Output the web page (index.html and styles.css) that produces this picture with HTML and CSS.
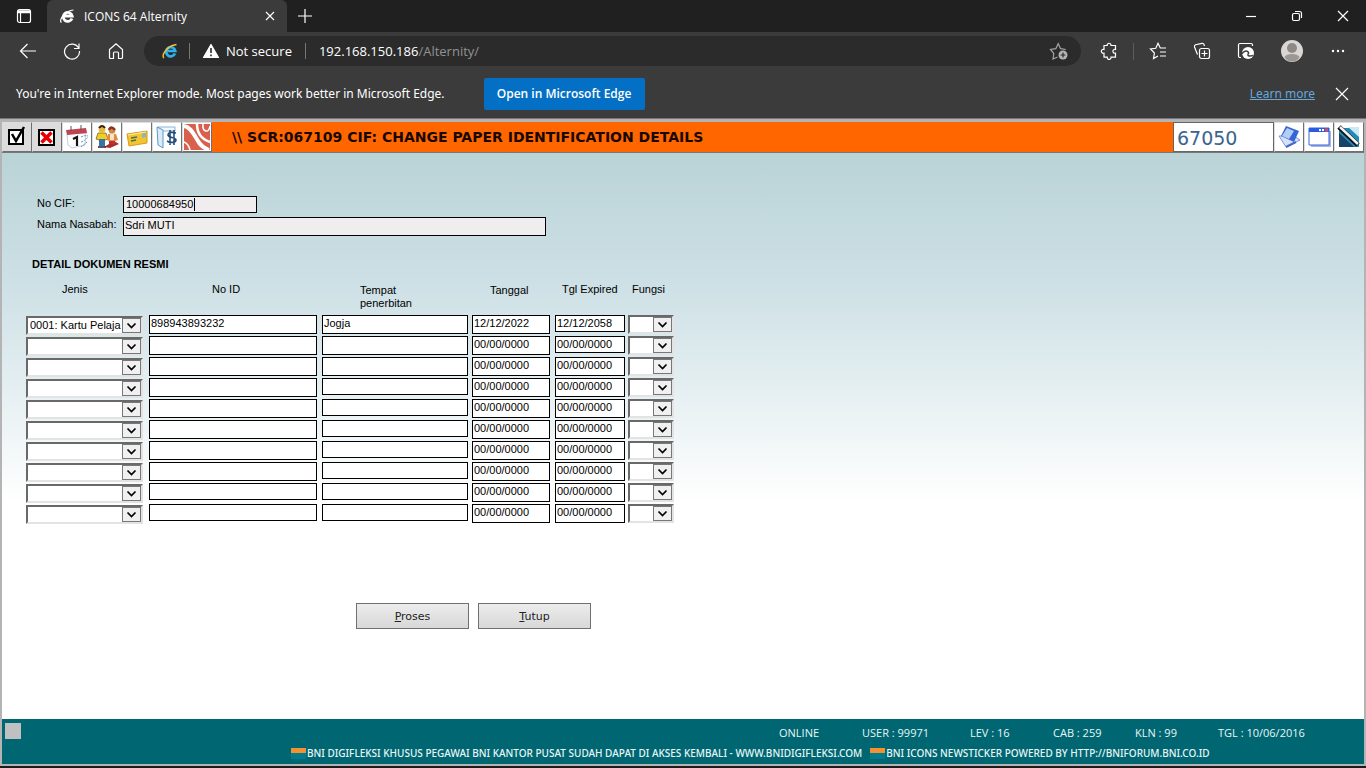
FILE: index.html
```html
<!DOCTYPE html>
<html lang="id">
<head>
<meta charset="utf-8">
<title>ICONS 64 Alternity</title>
<link rel="stylesheet" href="styles.css">
</head>
<body>
<header class="browser">
  <div class="titlebar">
    <button class="tab-menu" aria-label="Tab actions"><svg width="16" height="16" viewBox="0 0 16 16"><rect x="1.5" y="1.5" width="13" height="13" rx="2"/><path d="M2 3h12M2 4.500h12" stroke-width="1.500"/><path d="M4.500 5v9"/></svg></button>
    <div class="tab">
      <svg class="tab-logo" width="16" height="16" viewBox="0 0 16 16"><path d="M13 10.500a4.500 4.500 0 1 1 .2-2.500H5" stroke-width="2.800"/><path d="M2.500 14.500C-1 12.500 6 2.500 14.500 2" stroke-width="1.200"/></svg>
      <span class="tab-title">ICONS 64 Alternity</span>
      <button class="tab-close" aria-label="Close tab"><svg width="10" height="10" viewBox="0 0 10 10"><path d="M1 1l8 8M9 1l-8 8"/></svg></button>
    </div>
    <button class="new-tab" aria-label="New tab"><svg width="16" height="16" viewBox="0 0 16 16"><path d="M8 1v14M1 8h14"/></svg></button>
    <div class="window-controls">
      <button aria-label="Minimize"><svg width="12" height="12" viewBox="0 0 12 12"><path d="M1 6.500h10"/></svg></button>
      <button aria-label="Restore"><svg width="12" height="12" viewBox="0 0 12 12"><rect x="1.500" y="3.500" width="7" height="7" rx="1.500"/><path d="M4 1.500h4.500a2 2 0 0 1 2 2V8"/></svg></button>
      <button aria-label="Close"><svg width="12" height="12" viewBox="0 0 12 12"><path d="M1 1l10 10M11 1L1 11"/></svg></button>
    </div>
  </div>
  <nav class="toolbar">
    <button class="tool" aria-label="Back"><svg width="18" height="18" viewBox="0 0 18 18"><path d="M17 9H1.500M8.500 2l-7 7 7 7"/></svg></button>
    <button class="tool" aria-label="Refresh"><svg width="18" height="18" viewBox="0 0 18 18"><path d="M15.700 6.200A7.500 7.500 0 1 0 16.500 9M16 1.500v5h-5"/></svg></button>
    <button class="tool" aria-label="Home"><svg width="18" height="18" viewBox="0 0 18 18"><path d="M2.500 7.500L9 1.700l6.500 5.800v8a1 1 0 0 1-1 1h-3V11a1 1 0 0 0-1-1h-3a1 1 0 0 0-1 1v5.500h-3a1 1 0 0 1-1-1z"/></svg></button>
    <div class="address">
      <svg class="ie" width="18" height="18" viewBox="0 0 18 18"><path d="M14 11.500a4.600 4.600 0 1 1 .3-2.500H6" stroke="#2fb1ee" stroke-width="2.700"/><path d="M3 16C-.5 14 6 3.500 15.500 2.500" stroke="#f2c230" stroke-width="1.500"/></svg>
      <span class="divider"></span>
      <svg class="warn" width="18" height="16" viewBox="0 0 18 16"><path d="M9 1.500L16.500 14.500h-15z" fill="#fff" stroke="#fff" stroke-linejoin="round"/><path d="M9 5v5M9 11.500v1.700" stroke="#2b2b2b" stroke-width="1.600"/></svg>
      <span class="secure">Not secure</span>
      <span class="divider"></span>
      <span class="url">192.168.150.186<span class="path">/Alternity/</span></span>
      <button class="star" aria-label="Add to favorites"><svg width="20" height="18" viewBox="0 0 20 18"><path d="M8.500 15l-4.500 2 .8-5.500L1.500 7.500l5.300-.8L9.200 1.700l2.400 5 5.200.8"/><circle cx="14" cy="13" r="4.500" fill="#b5b5b5" stroke="none"/><path d="M14 10.500v5M11.500 13h5" stroke="#2b2b2b"/></svg></button>
    </div>
    <button class="tool ext" aria-label="Extensions"><svg width="18" height="18" viewBox="0 0 18 18"><path d="M4 3.500h3.200c-.3-3 4-3 3.800 0h4.500v4c-3.500-.6-3.500 4.200 0 3.700v4H11c.2 3-4.100 3-3.800 0H4v-4c-3.600.5-3.600-4.300 0-3.700z"/></svg></button>
    <span class="tool-divider"></span>
    <button class="tool" aria-label="Favorites"><svg width="18" height="18" viewBox="0 0 18 18"><path d="M9 14l-4.500 2.500.9-5.500L1.500 7l5.300-.7 2.200-5 2.300 4.700H17M11 10h6M11 14h6"/></svg></button>
    <button class="tool" aria-label="Collections"><svg width="18" height="18" viewBox="0 0 18 18"><rect x="6.500" y="6.500" width="10" height="10" rx="2"/><path d="M11.500 8.500v6M8.500 11.500h6M4.500 12.500L1.500 5a2 2 0 0 1 1-2.300L9 1.300c1.500-.3 2 .5 2.500 2.700"/></svg></button>
    <button class="tool" aria-label="Internet Explorer mode"><svg width="18" height="18" viewBox="0 0 18 18"><path d="M4 15.500H3a1.500 1.500 0 0 1-1.500-1.500V3A1.500 1.500 0 0 1 3 1.500h11A1.500 1.500 0 0 1 15.500 3v1"/><circle cx="11" cy="11" r="6" fill="#fff" stroke="none"/><path d="M5 12c1-3 5-4 6.500-1.500.5 1-.8 1.500-.6 2.500.3 1.300 3 1.300 5 .4" stroke="#3b3b3b" stroke-width="1.500"/></svg></button>
    <button class="tool profile" aria-label="Profile"><svg width="24" height="24" viewBox="0 0 24 24"><circle cx="12" cy="12" r="11" fill="#d9d6d3" stroke="none"/><circle cx="12" cy="9" r="5" fill="#8d8987" stroke="none"/><path d="M4.500 18c2-4 13-4 15 0-2.500 6-12.500 6-15 0z" fill="#9b9794" stroke="none"/></svg></button>
    <button class="tool" aria-label="Settings and more"><svg width="16" height="4" viewBox="0 0 16 4"><g fill="#fff" stroke="none"><circle cx="3" cy="2" r="1.200"/><circle cx="8" cy="2" r="1.200"/><circle cx="13" cy="2" r="1.200"/></g></svg></button>
  </nav>
  <div class="infobar">
    <span>You're in Internet Explorer mode. Most pages work better in Microsoft Edge.</span>
    <button class="open-edge">Open in Microsoft Edge</button>
    <a class="learn" href="#">Learn more</a>
    <button class="dismiss" aria-label="Dismiss"><svg width="14" height="14" viewBox="0 0 14 14"><path d="M1 1l12 12M13 1L1 13"/></svg></button>
  </div>
</header>
<main class="app">
  <div class="appbar">
    <button class="appbtn gray" aria-label="Proses"><svg width="26" height="26" viewBox="0 0 26 26"><rect x="5" y="6" width="14" height="14" fill="#fff" stroke="#000" stroke-width="2"/><path d="M8 10l4 7 8-14" stroke="#000" stroke-width="2.500"/></svg></button>
    <button class="appbtn gray" aria-label="Batal"><svg width="26" height="26" viewBox="0 0 26 26"><rect x="5" y="6" width="15" height="15" fill="#fff" stroke="#000" stroke-width="2"/><path d="M7.500 8.500l10 10M17.500 8.500l-10 10" stroke="#e80000" stroke-width="3.500"/></svg></button>
    <button class="appbtn" aria-label="Kalender"><svg width="26" height="26" viewBox="0 0 26 26"><path d="M3 10l19-1-1 12-13 3-4-3z" fill="#fff" stroke="#c3cede"/><path d="M2 6l20-2 1 5-20 2z" fill="#c04450"/><path d="M7 2v5M17 1v5" stroke="#555"/><path d="M9 15l4-2v9" stroke="#151515" stroke-width="2.200"/><path d="M17 13q4-2 7-1M17 18q4-1 7-5M17 23l6-5" stroke="#5b91c4" stroke-dasharray="2 1"/></svg></button>
    <button class="appbtn" aria-label="Nasabah"><svg width="26" height="26" viewBox="0 0 26 26"><path d="M10 23l10-6 5 3-9 4z" fill="#a92d2d"/><path d="M4 9h8l2 6-3 1H5l-3-1z" fill="#f0cf20" stroke="#6b541b" stroke-width=".7"/><path d="M5 15h6v7H5z" fill="#3573a8"/><path d="M4 23h8" stroke="#222" stroke-width="1.500"/><circle cx="8" cy="5.500" r="3.300" fill="#e9b93c"/><path d="M5 4q3-4 6 0" stroke="#352410" stroke-width="2"/><path d="M14 10h8l2 6-3 1h-6l-2-1z" fill="#e98838"/><path d="M16 10h4v6h-4z" fill="#f4e4cb"/><path d="M15 17h6v3h-6z" fill="#be2f33"/><circle cx="18" cy="6.500" r="3.300" fill="#d18b46"/><path d="M15 6q2-5 6 0" stroke="#8b351b" stroke-width="2.500"/></svg></button>
    <button class="appbtn" aria-label="Kartu"><svg width="26" height="26" viewBox="0 0 26 26"><path d="M3 10l20-3v12L5 22z" fill="#f0c433" stroke="#d89b17"/><path d="M7 14l6-1M7 17l5-1" stroke="#4c704b" stroke-width="1.500"/><path d="M18 9l4-1v5l-4 1z" fill="#94b5b1"/><path d="M4 11l18-3" stroke="#fff1a0"/></svg></button>
    <button class="appbtn" aria-label="Rekening"><svg width="26" height="26" viewBox="0 0 26 26"><path d="M4 3h17v4H9z" fill="#f3faff" stroke="#88b5da"/><path d="M3 3l6 3v18l-5-3z" fill="#d8edf9" stroke="#6097c5"/><path d="M22 9q-8-2-8 2c0 3 8 2 8 5s-6 3-9 1M16 6v15M20 6v15" stroke="#244e78" stroke-width="1.600"/></svg></button>
    <button class="appbtn" aria-label="BNI"><svg width="28" height="28" viewBox="0 0 28 28"><path d="M1 1h26v26H1z" fill="#d9604c"/><path d="M1 3c7 1 10 9 14 15 2 4 6 7 11 9" stroke="#fff" stroke-width="4"/><path d="M1 19c3 1 5 4 6 8" stroke="#fff" stroke-width="1.500"/><path d="M14 1c0 8 4 15 13 18" stroke="#fff" stroke-width="2.500"/><path d="M20 1c-1 8 6 10 7 2" stroke="#fff" stroke-width="1.500"/></svg></button>
    <h1>\\ SCR:067109 CIF: CHANGE PAPER IDENTIFICATION DETAILS</h1>
    <input class="screen-code" aria-label="Kode layar" value="67050">
    <button class="appbtn" aria-label="Buka"><svg width="26" height="26" viewBox="0 0 26 26"><path d="M3 12l7 11 14-7-6-4z" fill="#d5e1f8" stroke="#8097d4"/><path d="M10 2l13 5-5 11-13-6z" fill="#3666d5"/><path d="M11 4l7 3-5 8-7-3z" fill="#b4cdf7"/><path d="M10 23l10-5" stroke="#4668cb" stroke-width="2"/></svg></button>
    <button class="appbtn" aria-label="Jendela"><svg width="26" height="26" viewBox="0 0 26 26"><path d="M5 22h19V7" stroke="#a6b5dc" stroke-width="2"/><path d="M3 4h20v17H3z" fill="#fff" stroke="#3566dc"/><path d="M3 4h20v4H3z" fill="#2a5ce0"/><path d="M13 6h2M16 6h2" stroke="#fff" stroke-width="2"/><path d="M19 6h3" stroke="#e34c52" stroke-width="3"/></svg></button>
    <button class="appbtn" aria-label="Tulis"><svg width="26" height="26" viewBox="0 0 26 26"><path d="M3 4h20v19H3z" fill="#238ab8"/><path d="M12 3h11v10z" fill="#c8e9f5"/><path d="M3 9l15 14H3z" fill="#174466"/><path d="M3 3l19 18" stroke="#111" stroke-width="5"/><path d="M4 3l18 17" stroke="#f2f2f2" stroke-width="2.500"/></svg></button>
  </div>
  <form class="screen">
    <div class="customer">
      <label for="cif">No CIF:</label>
      <span class="cif-box"><input id="cif" class="cif" value="10000684950"><i class="caret"></i></span>
      <label for="nama">Nama Nasabah:</label>
      <input id="nama" class="nama" value="Sdri MUTI">
    </div>
    <h2>DETAIL DOKUMEN RESMI</h2>
    <table class="docs">
      <colgroup><col class="c1"><col class="c2"><col class="c3"><col class="c4"><col class="c5"><col class="c6"></colgroup>
      <thead><tr><th class="h1">Jenis</th><th class="h2">No ID</th><th class="h3">Tempat<br>penerbitan</th><th class="h4">Tanggal</th><th class="h5">Tgl Expired</th><th class="h6">Fungsi</th></tr></thead>
      <tbody id="rows"></tbody>
    </table>
    <div class="actions">
      <button type="button"><u>P</u>roses</button>
      <button type="button"><u>T</u>utup</button>
    </div>
  </form>
  <footer class="status">
    <span class="block"></span>
    <div class="session"><span>ONLINE</span><span>USER : 99971</span><span>LEV : 16</span><span>CAB : 259</span><span>KLN : 99</span><span>TGL : 10/06/2016</span></div>
    <div class="ticker">
      <i class="flag"></i><span class="news">BNI DIGIFLEKSI KHUSUS PEGAWAI BNI KANTOR PUSAT SUDAH DAPAT DI AKSES KEMBALI - WWW.BNIDIGIFLEKSI.COM</span>
      <i class="flag"></i><span>BNI ICONS NEWSTICKER POWERED BY HTTP://BNIFORUM.BNI.CO.ID</span>
    </div>
  </footer>
</main>
<script src="script.js"></script>
</body>
</html>
```
FILE: styles.css
```css
* { box-sizing: border-box; }
body {
  margin: 0;
  min-height: 100vh;
  display: flex;
  flex-direction: column;
  background: #1c1c1c;
  font-family: "Liberation Sans", Arial, sans-serif;
  font-size: 11px;
  color: #000;
}
button { border: 0; padding: 0; background: none; font: inherit; color: inherit; display: flex; align-items: center; justify-content: center; }
input, select { font: inherit; color: inherit; border-radius: 0; margin: 0; outline: 0; min-width: 0; }
svg { fill: none; flex: none; display: block; }

.browser { background: #3b3b3b; color: #fff; font-family: "Open Sans", "Noto Sans", sans-serif; font-size: 13px; }
.browser svg { stroke: #fff; stroke-width: 1.2; }
.titlebar { display: flex; height: 32px; background: #202020; }
.tab-menu { width: 47px; }
.tab { width: 240px; display: flex; align-items: center; padding: 0 12px; background: #3b3b3b; border-radius: 6px 6px 0 0; font-size: 12px; }
.tab-title { margin-left: 9px; flex: 1; white-space: nowrap; }
.new-tab { width: 35px; }
.window-controls { display: flex; margin-left: auto; }
.window-controls button { width: 46px; }
.toolbar { display: flex; align-items: center; height: 38px; padding: 0 6px; }
.tool { width: 44px; height: 32px; }
.profile { width: 48px; }
.ext { margin-left: 6px; }
.tool-divider { width: 1px; height: 17px; margin: 0 2px; background: #5c5c5c; }
.address { flex: 1; display: flex; align-items: center; height: 30px; margin-left: 6px; padding: 0 12px 0 17px; border-radius: 15px; background: #2b2b2b; font-size: 13px; }
.divider { width: 1px; height: 16px; background: #777; margin: 0 12px 0 10px; }
.secure { margin: 0 3px 0 6px; }
.url { margin-left: 1px; flex: 1; }
.path { color: #929292; }
.browser .star svg { stroke: #a5a5a5; }
.infobar { display: flex; align-items: center; height: 49px; padding: 0 17px 1px 16px; border-bottom: 1px solid #77757a; font-family: "Noto Sans", sans-serif; font-size: 12px; }
.open-edge { width: 161px; height: 32px; margin-left: 39px; background: #0470c5; border-radius: 2px; font-weight: 600; font-family: "Open Sans", sans-serif; white-space: nowrap; }
.learn { margin-left: auto; color: #64a8dc; }
.dismiss { margin-left: 20px; }

.app { flex: 1; display: flex; flex-direction: column; margin-bottom: 2px; border: 2px solid #b4b4b4; border-top-width: 3px; }
.appbar { display: flex; height: 31px; background: #ff6600; border-bottom: 1px solid #777; }
.appbtn { width: 30px; background: #fff; border: 1px solid #707070; border-left-color: #ddd; border-top-color: #ddd; overflow: hidden; }
.gray { background: #dcdcdc; }
.appbar h1 { flex: 1; margin: 0; padding-left: 20px; font: bold 14px/30px "DejaVu Sans", Verdana, sans-serif; white-space: nowrap; color: #180800; }
.screen-code { width: 101px; border: 1px solid #666; padding: 2px 3px 0; background: #fff; color: #3b648e; font: 19px "DejaVu Sans", Verdana, sans-serif; }

.screen { flex: 1; padding: 43px 0 0 24px; background: linear-gradient(#b9d3d7 0, #cde0e5 130px, #ffffff 350px); }
.customer { display: grid; grid-template-columns: 86px 1fr; row-gap: 4px; align-items: start; padding-left: 11px; line-height: 15px; }
.customer label { white-space: nowrap; }
.customer input { display: block; border: 1px solid #000; background: #efeded; padding: 0 1px 3px; }
.customer .cif { padding: 0 2px 1px; }
.cif-box { position: relative; }
.cif { width: 134px; height: 17px; }
.nama { width: 423px; height: 19px; }
.caret { position: absolute; left: 71px; top: 2px; width: 1px; height: 13px; background: #000; }
.screen h2 { margin: 21px 0 11px 6px; font-size: 11px; line-height: 15px; }

.docs { border-collapse: collapse; table-layout: fixed; width: 649px; }
.docs th { padding: 0; height: 32px; font-weight: normal; text-align: left; vertical-align: top; line-height: 13px; white-space: nowrap; }
.c1 { width: 123px; } .c2 { width: 173px; } .c3 { width: 150px; } .c4 { width: 83px; } .c5 { width: 73px; } .c6 { width: 47px; }
.docs .h1 { padding-left: 36px; }
.docs .h2 { padding-left: 63px; }
.docs .h3 { padding: 1px 0 0 38px; }
.docs .h4 { padding: 1px 0 0 18px; }
.docs .h5 { padding-left: 7px; }
.docs .h6 { padding-left: 4px; }
.docs td { height: 21px; padding: 0; vertical-align: top; }
.docs input { display: block; height: 19px; border: 1px solid #000; background: #fff; padding: 0 1px 3px; }
.id { width: 168px; } .place { width: 146px; } .date { width: 78px; } .expiry { width: 70px; }
.docs tr:nth-child(n+4) .place, .docs tr:nth-child(n+9) .id, .docs tr:nth-child(-n+2) .expiry { height: 17px; padding-bottom: 1px; }
.docs select {
  display: block;
  appearance: none;
  height: 19px;
  border: 2px solid;
  border-color: #696969 #e3e3e3 #e3e3e3 #696969;
  padding: 0 19px 1px 2px;
  background: #fff url("data:image/svg+xml,%3Csvg xmlns='http://www.w3.org/2000/svg' width='19' height='15'%3E%3Crect x='.5' y='.5' width='18' height='14' fill='%23f0f0f0' stroke='%23777'/%3E%3Cpath d='M5.500 5.500l4 4 4-4' fill='none' stroke='%23000' stroke-width='1.700'/%3E%3C/svg%3E") no-repeat right top;
}
.docs td:first-child { padding-top: 1px; }
.kind { width: 117px; }
.func { width: 46px; }

.actions { display: flex; gap: 9px; margin: 78px 0 24px 330px; }
.actions button { width: 113px; height: 26px; border: 1px solid #707070; background: linear-gradient(#ececec, #d8d8d8); display: block; font: 11px "DejaVu Sans", Verdana, sans-serif; color: #222; }

.status { position: relative; padding-top: 5px; height: 45px; background: #006672; color: #e9f6f6; font: 11px/18px "Open Sans", sans-serif; white-space: nowrap; }
.block { position: absolute; left: 3px; top: 4px; width: 16px; height: 16px; background: #c0c0c0; }
.session { display: grid; grid-template-columns: 83px 108px 83px 82px 83px 88px; justify-content: end; padding-right: 58px; height: 20px; }
.ticker { display: flex; align-items: center; padding-left: 289px; font-family: "Noto Sans", sans-serif; font-size: 10px; font-weight: 500; }
.flag { width: 15px; height: 11px; margin-right: 1px; background: linear-gradient(#f39031 45%, #007b8a 45%); }
.news { margin-right: 8px; }
```
FILE: script.js
```js
const rows = document.getElementById("rows");
for (let i = 0; i < 10; i++) {
  const first = i === 0;
  const n = i + 1;
  const tr = document.createElement("tr");
  tr.innerHTML = `
    <td><select class="kind" aria-label="Jenis ${n}"><option>${first ? "0001: Kartu Pelaja" : ""}</option></select></td>
    <td><input class="id" aria-label="No ID ${n}" value="${first ? "898943893232" : ""}"></td>
    <td><input class="place" aria-label="Tempat penerbitan ${n}" value="${first ? "Jogja" : ""}"></td>
    <td><input class="date" aria-label="Tanggal ${n}" value="${first ? "12/12/2022" : "00/00/0000"}"></td>
    <td><input class="expiry" aria-label="Tgl Expired ${n}" value="${first ? "12/12/2058" : "00/00/0000"}"></td>
    <td><select class="func" aria-label="Fungsi ${n}"><option></option></select></td>`;
  rows.appendChild(tr);
}
```
